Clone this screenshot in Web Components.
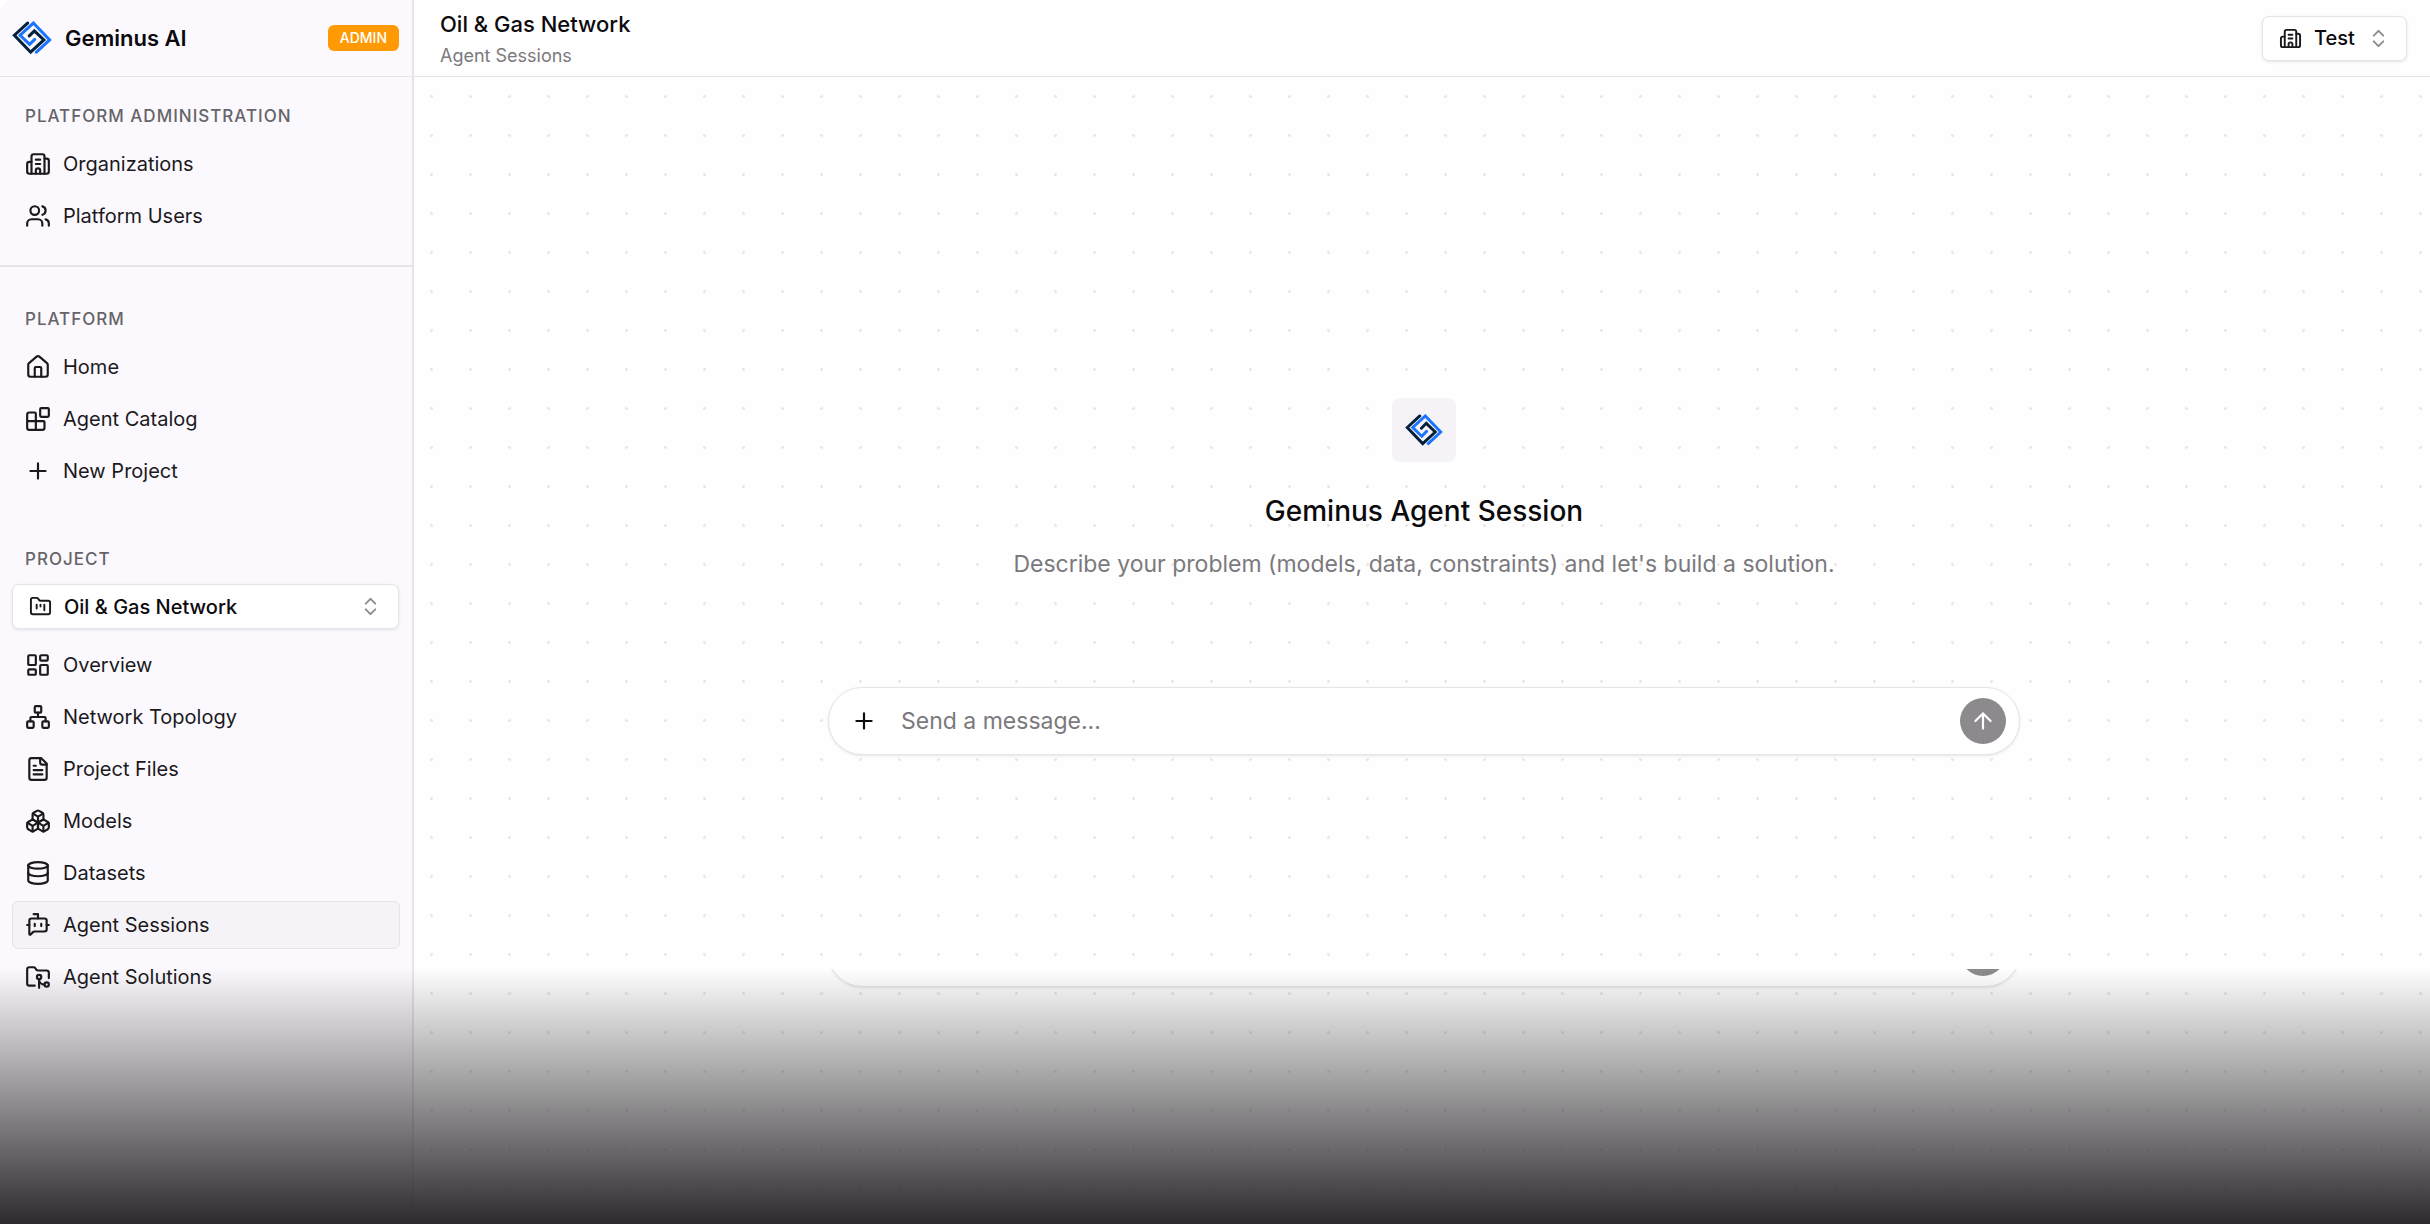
<!DOCTYPE html>
<html lang="en">
<head>
<meta charset="UTF-8">
<meta name="viewport" content="width=device-width, initial-scale=1">
<title>Geminus AI - Agent Sessions</title>
<style>
  :root {
    --text: #0c0a0d;
    --text-nav: #1b191d;
    --text-muted: #7b797d;
    --text-label: #666468;
    --border: #e6e4e8;
    --surface: #fefefe;
    --sidebar: #fbf9fd;
    --accent: #f5f3f7;
    --admin: #ff9a05;
    --send: #8d8a8e;
    --logo-dark: #04203a;
    --logo-blue: #1b74ff;
  }

  body {
    margin: 0;
    background: #fff;
    color: var(--text);
    font-family: Inter, "Liberation Sans", sans-serif;
    font-size: 20px;
    -webkit-font-smoothing: antialiased;
  }
</style>
</head>
<body>
<app-shell>
  <app-sidebar slot="sidebar">
    <nav-group heading="Platform Administration" divided>
      <nav-item icon="building">Organizations</nav-item>
      <nav-item icon="users">Platform Users</nav-item>
    </nav-group>
    <nav-group heading="Platform">
      <nav-item icon="house">Home</nav-item>
      <nav-item icon="blocks">Agent Catalog</nav-item>
      <nav-item icon="plus">New Project</nav-item>
    </nav-group>
    <nav-group heading="Project">
      <option-picker slot="picker" icon="folder-kanban" label="Project" value="Oil &amp; Gas Network"></option-picker>
      <nav-item icon="dashboard">Overview</nav-item>
      <nav-item icon="network">Network Topology</nav-item>
      <nav-item icon="file-text">Project Files</nav-item>
      <nav-item icon="boxes">Models</nav-item>
      <nav-item icon="database">Datasets</nav-item>
      <nav-item icon="bot" active>Agent Sessions</nav-item>
      <nav-item icon="folder-git">Agent Solutions</nav-item>
    </nav-group>
  </app-sidebar>
  <page-header slot="header">
    <span slot="title">Oil &amp; Gas Network</span>
    <span slot="subtitle">Agent Sessions</span>
    <option-picker slot="actions" icon="building" label="Organization" value="Test"></option-picker>
  </page-header>
  <session-intro>
    <span slot="title">Geminus Agent Session</span>
    <span slot="description">Describe your problem (models, data, constraints) and let's build a solution.</span>
    <message-composer></message-composer>
  </session-intro>
  <message-composer slot="docked" blank></message-composer>
</app-shell>

<script>
const ICONS = {
  building: '<path d="M10 12h4M10 8h4M14 21v-3a2 2 0 0 0-4 0v3"/><path d="M6 10H4a2 2 0 0 0-2 2v7a2 2 0 0 0 2 2h16a2 2 0 0 0 2-2V9a2 2 0 0 0-2-2h-2"/><path d="M6 21V5a2 2 0 0 1 2-2h8a2 2 0 0 1 2 2v16"/>',
  users: '<path d="M16 21v-2a4 4 0 0 0-4-4H6a4 4 0 0 0-4 4v2"/><path d="M16 3.128a4 4 0 0 1 0 7.744"/><path d="M22 21v-2a4 4 0 0 0-3-3.87"/><circle cx="9" cy="7" r="4"/>',
  house: '<path d="M15 21v-8a1 1 0 0 0-1-1h-4a1 1 0 0 0-1 1v8"/><path d="M3 10a2 2 0 0 1 .709-1.528l7-6a2 2 0 0 1 2.582 0l7 6A2 2 0 0 1 21 10v9a2 2 0 0 1-2 2H5a2 2 0 0 1-2-2z"/>',
  blocks: '<path d="M10 22V7a1 1 0 0 0-1-1H4a2 2 0 0 0-2 2v12a2 2 0 0 0 2 2h12a2 2 0 0 0 2-2v-5a1 1 0 0 0-1-1H2"/><rect x="14" y="2" width="8" height="8" rx="1"/>',
  plus: '<path d="M5 12h14M12 5v14"/>',
  'folder-kanban': '<path d="M4 20h16a2 2 0 0 0 2-2V8a2 2 0 0 0-2-2h-7.93a2 2 0 0 1-1.66-.9l-.82-1.2A2 2 0 0 0 7.93 3H4a2 2 0 0 0-2 2v13c0 1.1.9 2 2 2Z"/><path d="M8 10v4M12 10v2M16 10v6"/>',
  dashboard: '<rect x="3" y="3" width="7" height="9" rx="1"/><rect x="14" y="3" width="7" height="5" rx="1"/><rect x="14" y="12" width="7" height="9" rx="1"/><rect x="3" y="16" width="7" height="5" rx="1"/>',
  network: '<rect x="16" y="16" width="6" height="6" rx="1"/><rect x="2" y="16" width="6" height="6" rx="1"/><rect x="9" y="2" width="6" height="6" rx="1"/><path d="M5 16v-3a1 1 0 0 1 1-1h12a1 1 0 0 1 1 1v3M12 12V8"/>',
  'file-text': '<path d="M15 2H6a2 2 0 0 0-2 2v16a2 2 0 0 0 2 2h12a2 2 0 0 0 2-2V7Z"/><path d="M14 2v4a2 2 0 0 0 2 2h4M10 9H8M16 13H8M16 17H8"/>',
  boxes: '<path d="M2.97 12.92A2 2 0 0 0 2 14.63v3.24a2 2 0 0 0 .97 1.71l3 1.8a2 2 0 0 0 2.06 0L12 19v-5.5l-5-3-4.03 2.42Z"/><path d="m7 16.5-4.74-2.85M7 16.5l5-3M7 16.5v5.17"/><path d="M12 13.5V19l3.97 2.38a2 2 0 0 0 2.06 0l3-1.8a2 2 0 0 0 .97-1.71v-3.24a2 2 0 0 0-.97-1.71L17 10.5l-5 3Z"/><path d="m17 16.5-5-3M17 16.5l4.74-2.85M17 16.5v5.17"/><path d="M7.97 4.42A2 2 0 0 0 7 6.13v4.37l5 3 5-3V6.13a2 2 0 0 0-.97-1.71l-3-1.8a2 2 0 0 0-2.06 0l-3 1.8Z"/><path d="M12 8 7.26 5.15M12 8l4.74-2.85M12 13.5V8"/>',
  database: '<ellipse cx="12" cy="5" rx="9" ry="3"/><path d="M3 5v14a9 3 0 0 0 18 0V5"/><path d="M3 12a9 3 0 0 0 18 0"/>',
  bot: '<path d="M12 6V2H8M15 11v2M2 12h2M20 12h2M9 11v2"/><path d="M20 16a2 2 0 0 1-2 2H8.828a2 2 0 0 0-1.414.586l-2.202 2.202A.71.71 0 0 1 4 20.286V8a2 2 0 0 1 2-2h12a2 2 0 0 1 2 2z"/>',
  'folder-git': '<path d="M9 20H4a2 2 0 0 1-2-2V5a2 2 0 0 1 2-2h3.9a2 2 0 0 1 1.69.9l.81 1.2a2 2 0 0 0 1.67.9H20a2 2 0 0 1 2 2v5"/><circle cx="13" cy="12" r="2"/><path d="M18 19c-2.8 0-5-2.2-5-5v8"/><circle cx="20" cy="19" r="2"/>',
  chevrons: '<path d="m7 15 5 5 5-5M7 9l5-5 5 5"/>',
  'arrow-up': '<path d="m5 12 7-7 7 7M12 19V5"/>'
};

class AppIcon extends HTMLElement {
  connectedCallback() {
    if (this.shadowRoot) return;
    this.attachShadow({ mode: 'open' }).innerHTML = `
      <style>
        :host { display: block; flex: none; width: 26px; height: 26px; }
        svg {
          display: block;
          width: 100%;
          height: 100%;
          fill: none;
          stroke: currentColor;
          stroke-width: 2;
          stroke-linecap: round;
          stroke-linejoin: round;
        }
      </style>
      <svg viewBox="0 0 24 24" aria-hidden="true">${ICONS[this.getAttribute('name')] || ''}</svg>
    `;
  }
}

class BrandLogo extends HTMLElement {
  connectedCallback() {
    if (this.shadowRoot) return;
    this.attachShadow({ mode: 'open' }).innerHTML = `
      <style>
        :host { display: block; flex: none; width: 40px; }
        svg { display: block; width: 100%; fill: none; stroke-width: 9; stroke-linecap: round; }
        .dark { stroke: var(--logo-dark); }
        .blue { stroke: var(--logo-blue); }
      </style>
      <svg viewBox="0 0 118 98" aria-hidden="true">
        <path class="dark" d="M46 6 7 42l48 50 39-36-28-27-15 15"/>
        <path class="blue" d="m72 92 39-36L63 6 24 42l28 27 15-15"/>
      </svg>
    `;
  }
}

class AppShell extends HTMLElement {
  constructor() {
    super();
    this.attachShadow({ mode: 'open' }).innerHTML = `
      <style>
        :host {
          position: relative;
          display: grid;
          grid-template-columns: 414px minmax(0, 1fr);
          min-height: 100vh;
          border-top-left-radius: 14px;
          overflow: hidden;
        }
        .page {
          display: flex;
          flex-direction: column;
          background: var(--surface);
        }
        main {
          flex: 1;
          display: flex;
          flex-direction: column;
          background-image: radial-gradient(circle, #e9e7ea 1px, transparent 2px);
          background-size: 39px 39px;
          background-position: -2px 0;
        }
        .content {
          flex: 1;
          display: flex;
          padding-left: 4px;
        }
        .bottom {
          height: 255px;
          padding-left: 4px;
        }
        .docked {
          display: flex;
          align-items: flex-end;
          justify-content: center;
          height: 22px;
          padding-bottom: 4px;
          box-sizing: border-box;
          overflow: hidden;
        }
        /* darkens the lower edge of the whole window */
        .fade {
          position: absolute;
          inset: auto 0 0;
          height: 256px;
          background: linear-gradient(rgba(46, 43, 46, 0), #2e2b2e);
          pointer-events: none;
        }
      </style>
      <slot name="sidebar"></slot>
      <div class="page">
        <slot name="header"></slot>
        <main>
          <div class="content"><slot></slot></div>
          <div class="bottom"><div class="docked"><slot name="docked"></slot></div></div>
        </main>
      </div>
      <div class="fade"></div>
    `;
  }
}

class AppSidebar extends HTMLElement {
  constructor() {
    super();
    this.attachShadow({ mode: 'open' }).innerHTML = `
      <style>
        :host {
          display: block;
          background: var(--sidebar);
          border-right: 2px solid var(--border);
        }
        header {
          display: flex;
          align-items: center;
          gap: 13px;
          height: 76px;
          padding: 0 13px 0 12px;
          border-bottom: 1px solid var(--border);
        }
        strong { flex: 1; font-size: 22px; font-weight: 600; }
        .badge {
          padding: 0 12px;
          border-radius: 6px;
          background: var(--admin);
          color: #fff;
          font-size: 14px;
          font-weight: 500;
          line-height: 26px;
        }
      </style>
      <header>
        <brand-logo></brand-logo>
        <strong>Geminus AI</strong>
        <span class="badge">ADMIN</span>
      </header>
      <nav><slot></slot></nav>
    `;
  }
}

class NavGroup extends HTMLElement {
  connectedCallback() {
    if (this.shadowRoot) return;
    this.attachShadow({ mode: 'open' }).innerHTML = `
      <style>
        :host { display: block; padding: 40px 12px 12px; }
        :host([divided]) {
          padding: 27px 12px 25px;
          border-bottom: 2px solid var(--border);
        }
        h2 {
          margin: 0 0 12px;
          padding: 0 13px;
          color: var(--text-label);
          font-size: 17px;
          font-weight: 500;
          line-height: 24px;
          letter-spacing: 1px;
          text-transform: uppercase;
        }
        .items { display: flex; flex-direction: column; gap: 4px; }
        ::slotted(option-picker) { margin: 13px 1px 12px 0; }
      </style>
      <h2>${this.getAttribute('heading')}</h2>
      <slot name="picker"></slot>
      <div class="items"><slot></slot></div>
    `;
  }
}

class NavItem extends HTMLElement {
  connectedCallback() {
    if (this.shadowRoot) return;
    this.attachShadow({ mode: 'open' }).innerHTML = `
      <style>
        :host { display: block; }
        a {
          display: flex;
          align-items: center;
          gap: 12px;
          box-sizing: border-box;
          height: 48px;
          padding: 0 12px;
          border: 1px solid transparent;
          border-radius: 6px;
          color: var(--text-nav);
          font-size: 20px;
          text-decoration: none;
        }
        :host([active]) a { background: var(--accent); border-color: var(--border); }
      </style>
      <a href="#" ${this.hasAttribute('active') ? 'aria-current="page"' : ''}>
        <app-icon name="${this.getAttribute('icon')}"></app-icon>
        <span><slot></slot></span>
      </a>
    `;
  }
}

class OptionPicker extends HTMLElement {
  connectedCallback() {
    if (this.shadowRoot) return;
    this.attachShadow({ mode: 'open' }).innerHTML = `
      <style>
        :host { display: block; }
        label {
          display: flex;
          align-items: center;
          gap: 12px;
          box-sizing: border-box;
          height: 45px;
          padding: 0 16px;
          background: #fff;
          border: 1px solid var(--border);
          border-radius: 7px;
          box-shadow: 0 1px 3px rgba(12, 10, 13, 0.1);
        }
        select {
          flex: 1;
          min-width: 0;
          padding: 0;
          border: 0;
          background: none;
          appearance: none;
          color: var(--text);
          font: 500 20px/28px Inter, "Liberation Sans", sans-serif;
        }
        app-icon { width: 23px; height: 23px; color: var(--text-nav); }
        .chevrons { color: #8d8b8e; }
      </style>
      <label>
        <app-icon name="${this.getAttribute('icon')}"></app-icon>
        <select aria-label="${this.getAttribute('label')}"><option></option></select>
        <app-icon class="chevrons" name="chevrons"></app-icon>
      </label>
    `;
    this.shadowRoot.querySelector('option').textContent = this.getAttribute('value');
  }
}

class PageHeader extends HTMLElement {
  constructor() {
    super();
    this.attachShadow({ mode: 'open' }).innerHTML = `
      <style>
        :host {
          display: flex;
          align-items: center;
          justify-content: space-between;
          height: 76px;
          padding: 0 23px 0 26px;
          border-bottom: 1px solid var(--border);
        }
        .titles { padding-top: 3px; }
        h1 { margin: 0; font-size: 22px; font-weight: 500; line-height: 32px; }
        p { margin: 0; color: var(--text-muted); font-size: 18px; line-height: 32px; }
      </style>
      <div class="titles">
        <h1><slot name="title"></slot></h1>
        <p><slot name="subtitle"></slot></p>
      </div>
      <slot name="actions"></slot>
    `;
  }
}

class SessionIntro extends HTMLElement {
  constructor() {
    super();
    this.attachShadow({ mode: 'open' }).innerHTML = `
      <style>
        :host {
          flex: 1;
          display: flex;
          flex-direction: column;
          align-items: center;
          text-align: center;
        }
        :host::before { content: ""; flex: 3; }
        :host::after { content: ""; flex: 2; }
        .tile {
          display: grid;
          place-items: center;
          width: 64px;
          height: 64px;
          border-radius: 8px;
          background: var(--accent);
        }
        brand-logo { width: 38px; }
        h2 { margin: 29px 0 17px; font-size: 28px; font-weight: 500; line-height: 40px; }
        p { margin: 0 0 107px; color: var(--text-muted); font-size: 23px; line-height: 32px; }
      </style>
      <div class="tile"><brand-logo></brand-logo></div>
      <h2><slot name="title"></slot></h2>
      <p><slot name="description"></slot></p>
      <slot></slot>
    `;
  }
}

class MessageComposer extends HTMLElement {
  connectedCallback() {
    if (this.shadowRoot) return;
    const blank = this.hasAttribute('blank');
    this.attachShadow({ mode: 'open' }).innerHTML = `
      <style>
        :host { display: block; flex: none; width: min(1192px, 100%); }
        form {
          display: flex;
          align-items: center;
          box-sizing: border-box;
          height: 68px;
          margin: 0;
          padding: 0 13px 0 22px;
          background: #fff;
          border: 1px solid var(--border);
          border-radius: 34px;
          box-shadow: 0 1px 3px rgba(12, 10, 13, 0.1);
        }
        button {
          flex: none;
          display: grid;
          place-items: center;
          padding: 0;
          border: 0;
          background: none;
          color: var(--text);
        }
        .send {
          width: 46px;
          height: 46px;
          border-radius: 50%;
          background: var(--send);
          color: #fff;
        }
        input {
          flex: 1;
          min-width: 0;
          margin: 0 24px;
          padding: 0;
          border: 0;
          outline: 0;
          background: none;
          color: var(--text);
          font: 400 23px/32px Inter, "Liberation Sans", sans-serif;
        }
        input::placeholder { color: var(--text-muted); opacity: 1; }
      </style>
      <form>
        <button type="button" aria-label="Add attachment"><app-icon name="plus"></app-icon></button>
        <input type="text" aria-label="Message" ${blank ? '' : 'placeholder="Send a message..."'}>
        <button class="send" type="submit" aria-label="Send"><app-icon name="arrow-up"></app-icon></button>
      </form>
    `;
    this.shadowRoot.querySelector('form').addEventListener('submit', (e) => e.preventDefault());
  }
}

customElements.define('app-icon', AppIcon);
customElements.define('brand-logo', BrandLogo);
customElements.define('app-shell', AppShell);
customElements.define('app-sidebar', AppSidebar);
customElements.define('nav-group', NavGroup);
customElements.define('nav-item', NavItem);
customElements.define('option-picker', OptionPicker);
customElements.define('page-header', PageHeader);
customElements.define('session-intro', SessionIntro);
customElements.define('message-composer', MessageComposer);
</script>
</body>
</html>
